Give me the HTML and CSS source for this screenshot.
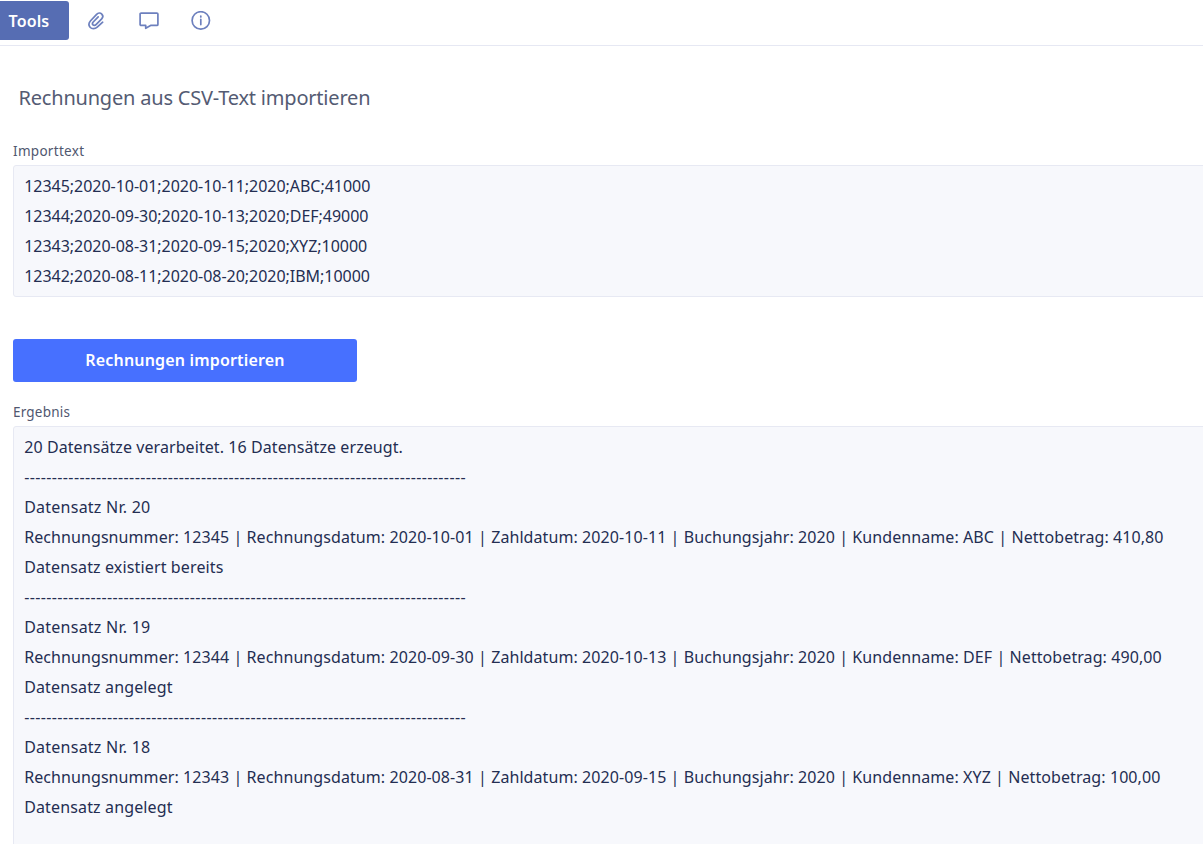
FILE: index.html
```html
<!DOCTYPE html>
<html lang="de">
<head>
<meta charset="utf-8">
<title>Rechnungen importieren</title>
<link rel="stylesheet" href="styles.css">
</head>
<body>
<nav class="tabs">
<div class="tab-active">Tools</div>
<svg class="icon clip" viewBox="0 0 20 20"><path d="M16.7 11.2 11.2 16.2C9 18.2 5.8 18.2 4.1 16.2C2.5 14.4 2.8 11.8 4.6 9.8L10.6 3.4C12 1.9 14.4 1.8 15.8 3.1C17.2 4.5 17 6.4 15.7 7.8L10 13.7C9.1 14.6 7.8 14.7 7 13.9C6.2 13.1 6.3 12 7.2 11L12.2 5.8"/></svg>
<svg class="icon chat" viewBox="0 0 20 20"><path d="M2.1 2.1h15.8a1 1 0 0 1 1 1v10.3a1 1 0 0 1-1 1h-6.3L6.7 17.3v-2.9H2.1a1 1 0 0 1-1-1V3.1a1 1 0 0 1 1-1z"/></svg>
<svg class="icon info" viewBox="0 0 20 20"><circle cx="9.8" cy="9.4" r="8.7"/><path d="M9.8 8.3v5.3M9.8 5v1"/></svg>
</nav>
<main class="form">
<h1 class="title">Rechnungen aus CSV-Text importieren</h1>
<div class="label">Importtext</div>
<div class="field import">12345;2020-10-01;2020-10-11;2020;ABC;41000
12344;2020-09-30;2020-10-13;2020;DEF;49000
12343;2020-08-31;2020-09-15;2020;XYZ;10000
12342;2020-08-11;2020-08-20;2020;IBM;10000</div>
<button class="submit">Rechnungen importieren</button>
<div class="label">Ergebnis</div>
<div class="field result">20 Datensätze verarbeitet. 16 Datensätze erzeugt.
<span class="rule">--------------------------------------------------------------------------------</span>
<span class="short">Datensatz Nr. 20</span>
Rechnungsnummer: 12345 | Rechnungsdatum: 2020-10-01 | Zahldatum: 2020-10-11 | Buchungsjahr: 2020 | Kundenname: ABC | Nettobetrag: 410,80
<span class="status">Datensatz existiert bereits</span>
<span class="rule">--------------------------------------------------------------------------------</span>
<span class="short">Datensatz Nr. 19</span>
Rechnungsnummer: 12344 | Rechnungsdatum: 2020-09-30 | Zahldatum: 2020-10-13 | Buchungsjahr: 2020 | Kundenname: DEF | Nettobetrag: 490,00
<span class="status">Datensatz angelegt</span>
<span class="rule">--------------------------------------------------------------------------------</span>
<span class="short">Datensatz Nr. 18</span>
Rechnungsnummer: 12343 | Rechnungsdatum: 2020-08-31 | Zahldatum: 2020-09-15 | Buchungsjahr: 2020 | Kundenname: XYZ | Nettobetrag: 100,00
<span class="status">Datensatz angelegt</span></div>
</main>
</body>
</html>
```
FILE: styles.css
```css
* { box-sizing: border-box; }
body { margin: 0; height: 844px; overflow: hidden; background: #fff; font-family: "Noto Sans", sans-serif; color: #242e52; }
.tabs { display: flex; align-items: flex-start; height: 46px; padding-top: 1px; border-bottom: 1px solid #e6e8f3; }
.tab-active { width: 69px; height: 39px; padding-left: 8.5px; border-radius: 0 3px 3px 0; background: #566db3; color: #fff; font-size: 16px; font-weight: 600; line-height: 41px; letter-spacing: 0.15px; }
.icon { width: 20px; height: 20px; margin-top: 10px; fill: none; stroke: #6d80be; stroke-width: 1.7; stroke-linejoin: round; stroke-linecap: round; }
.clip { margin-left: 17px; }
.chat { margin-left: 33px; }
.info { margin-left: 32px; }
.form { display: flex; flex-direction: column; align-items: flex-start; padding-left: 13px; }
.title { margin: 36px 0 0 5.5px; font-size: 20px; font-weight: 400; line-height: 32px; letter-spacing: -0.2px; color: #545b73; }
.label { height: 20px; margin-top: 27px; font-size: 13.5px; font-weight: 400; line-height: 20px; letter-spacing: 0.3px; color: #50576f; }
.field { width: 1200px; margin-top: 4px; padding: 5px 10.2px; border: 1px solid #e7e9f3; border-radius: 3px; background: #f7f8fc; font-size: 16px; line-height: 30px; white-space: pre; }
.import { height: 132px; letter-spacing: -0.03px; }
.result { height: 430px; letter-spacing: 0.08px; }
.rule { letter-spacing: 0.37px; }
.short { letter-spacing: 0.24px; }
.status { letter-spacing: 0.14px; }
.submit { width: 344px; height: 43px; margin-top: 42px; padding: 0; border: 0; border-radius: 3px; background: #4770ff; color: #fff; font: 600 16px/43px "Noto Sans", sans-serif; letter-spacing: 0.17px; }
.submit + .label { margin-top: 20px; letter-spacing: 0.2px; }
```
